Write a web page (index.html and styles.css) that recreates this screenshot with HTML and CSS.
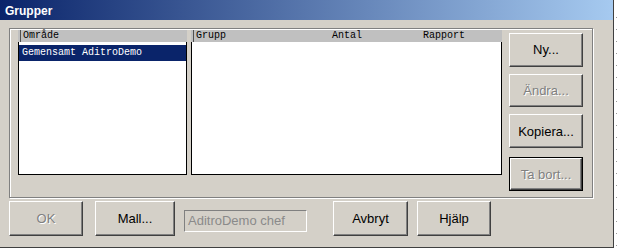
FILE: index.html
```html
<!DOCTYPE html>
<html>

<head>
    <meta charset="UTF-8">
    <meta name="viewport" content="width=device-width, initial-scale=1.0">
    <link rel="stylesheet" href="styles.css">
</head>

<body>
    <div class="window">
        <div class="titlebar">Grupper</div>
        <div class="client">
            <div class="groupbox">
                <div class="list list-area">
                    <div class="list-head">
                        <span class="col">Område</span>
                    </div>
                    <div class="list-body">
                        <div class="row selected">Gemensamt AditroDemo</div>
                    </div>
                </div>
                <div class="list list-groups">
                    <div class="list-head">
                        <span class="col col-grupp">Grupp</span>
                        <span class="col-plain col-antal">Antal</span>
                        <span class="col-plain col-rapport">Rapport</span>
                    </div>
                    <div class="list-body"></div>
                </div>
                <div class="side-buttons">
                    <button class="btn">Ny...</button>
                    <button class="btn" disabled>Ändra...</button>
                    <button class="btn">Kopiera...</button>
                    <button class="btn btn-default" disabled>Ta bort...</button>
                </div>
            </div>
            <div class="bottom-row">
                <button class="btn btn-ok" disabled>OK</button>
                <button class="btn btn-mall">Mall...</button>
                <div class="field">AditroDemo chef</div>
                <button class="btn btn-avbryt">Avbryt</button>
                <button class="btn btn-hjalp">Hjälp</button>
            </div>
        </div>
    </div>
    <div class="edge"></div>
</body>

</html>
```

FILE: styles.css
```css
body {
    margin: 0;
    padding: 0;
    background-color: #fff;
    font-family: "Liberation Sans", Arial, sans-serif;
    display: flex;
    width: 618px;
    height: 249px;
    overflow: hidden;
}

.window {
    width: 613px;
    height: 247px;
    background-color: #d4d0c8;
    border-right: 1px solid #404040;
    border-bottom: 1px solid #404040;
    display: flex;
    flex-direction: column;
}

.titlebar {
    height: 20px;
    line-height: 20px;
    padding-left: 5px;
    padding-top: 1px;
    box-sizing: border-box;
    background: linear-gradient(to right, #0a246a, #a6caf0);
    color: #fff;
    font-weight: bold;
    font-size: 12px;
}

.client {
    padding: 8px 0 0 9px;
}

/* etched frame round the lists */
.groupbox {
    width: 584px;
    height: 170px;
    box-sizing: border-box;
    border: 1px solid #808080;
    box-shadow: inset 1px 1px 0 #fff, 1px 1px 0 #fff;
    padding: 1px 0 0 8px;
    display: flex;
}

.list {
    height: 145px;
    display: flex;
    flex-direction: column;
    font-family: "Liberation Mono", "Courier New", monospace;
    font-size: 10px;
}

.list-area {
    width: 169px;
}

.list-groups {
    width: 311px;
    margin-left: 4px;
}

.list-head {
    height: 12px;
    line-height: 12px;
    background-color: #c0c0c0;
    display: flex;
    padding-left: 2px;
    color: #000;
}

.col {
    border-left: 1px solid #505050;
    padding-left: 2px;
}

.col-grupp {
    width: 136px;
}

.col-antal {
    width: 91px;
}

.list-body {
    flex: 1;
    background-color: #fff;
    border: 1px solid #000;
    border-top: none;
    padding-top: 3px;
}

.row {
    height: 16px;
    line-height: 16px;
    padding-left: 3px;
}

.selected {
    background-color: #0a246a;
    color: #fff;
}

.side-buttons {
    display: flex;
    flex-direction: column;
    margin-left: 7px;
    padding-top: 3px;
}

.btn {
    width: 74px;
    height: 35px;
    box-sizing: border-box;
    background-color: #d4d0c8;
    border: 1px solid;
    border-color: #fff #404040 #404040 #fff;
    box-shadow: inset -1px -1px 0 #808080;
    font-family: "Liberation Sans", Arial, sans-serif;
    font-size: 13px;
    color: #000;
    padding: 0;
    margin: 0 0 7px 0;
}

.btn:disabled {
    color: #808080;
    text-shadow: 1px 1px 0 #fff;
}

/* default button gets a black ring */
.btn-default {
    width: 72px;
    height: 33px;
    margin-left: 1px;
    margin-top: 3px;
    box-shadow: inset -1px -1px 0 #808080, 0 0 0 1px #000;
}

.bottom-row {
    display: flex;
    align-items: flex-start;
    margin-top: 3px;
}

.bottom-row .btn {
    margin: 0;
}

.btn-mall {
    width: 80px;
    margin-left: 12px !important;
}

.field {
    width: 123px;
    height: 22px;
    box-sizing: border-box;
    margin: 9px 0 0 9px;
    border: 1px solid;
    border-color: #808080 #fff #fff #808080;
    color: #8a8a8a;
    font-size: 13px;
    line-height: 20px;
    padding-left: 3px;
}

.btn-avbryt {
    width: 75px;
    margin-left: 26px !important;
}

.btn-hjalp {
    margin-left: 9px !important;
}

.edge {
    flex: 1;
    background: repeating-linear-gradient(to bottom, #fff 0, #fff 11px, #9a9a9a 11px, #9a9a9a 12px);
    background-size: 1px 100%;
    background-position: 2px 6px;
    background-repeat: no-repeat;
}
```
